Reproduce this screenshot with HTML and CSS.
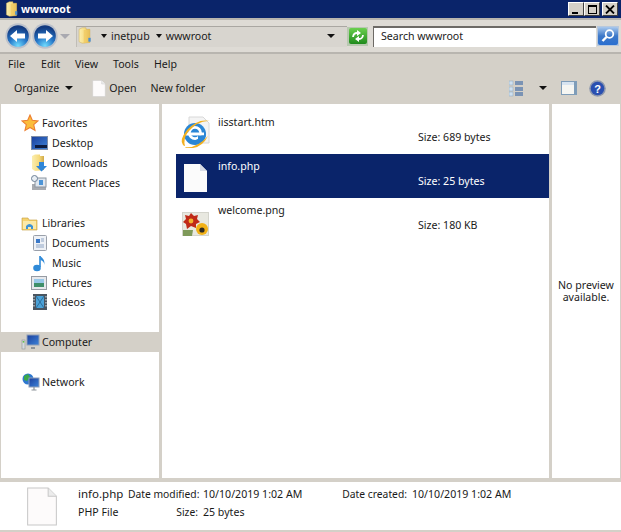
FILE: index.html
```html
<!DOCTYPE html>
<html lang="en">
<head>
    <meta charset="UTF-8">
    <meta name="viewport" content="width=device-width, initial-scale=1.0">
    <title>wwwroot</title>
    <link rel="stylesheet" href="styles.css">
</head>
<body>
    <svg class="defs" width="0" height="0">
        <defs>
            <linearGradient id="folderFill" x1="0" y1="0" x2="1" y2="0">
                <stop offset="0" stop-color="#fbeeb0"/><stop offset="0.6" stop-color="#f6da7c"/><stop offset="1" stop-color="#cfa94a"/>
            </linearGradient>
            <radialGradient id="orbFill" cx="0.5" cy="0.95" r="0.85">
                <stop offset="0" stop-color="#6fdcff"/><stop offset="0.5" stop-color="#2677c8"/><stop offset="1" stop-color="#123a80"/>
            </radialGradient>
            <linearGradient id="greenFill" x1="0" y1="0" x2="0" y2="1">
                <stop offset="0" stop-color="#6bd04f"/><stop offset="1" stop-color="#1f8a1c"/>
            </linearGradient>
            <linearGradient id="blueBtn" x1="0" y1="0" x2="0" y2="1">
                <stop offset="0" stop-color="#a8c8ee"/><stop offset="0.5" stop-color="#3d78c8"/><stop offset="1" stop-color="#2a6fd0"/>
            </linearGradient>
            <linearGradient id="screenFill" x1="0" y1="0" x2="1" y2="1">
                <stop offset="0" stop-color="#1b3f9c"/><stop offset="1" stop-color="#3d83d8"/>
            </linearGradient>
            <symbol id="i-folder" viewBox="0 0 16 22">
                <path d="M1 3 L5 1 L10 1 L10 3 L15 3 L15 20 L5 21 L1 19 Z" fill="url(#folderFill)" stroke="#c8a850" stroke-width=".6"/>
                <path d="M7 4 L15 3 L15 20 L7 21 Z" fill="#f0c860" opacity=".7"/>
                <rect x="13" y="14" width="3" height="5" fill="#4a8ed0"/>
            </symbol>
            <symbol id="i-orb" viewBox="0 0 26 26">
                <circle cx="13" cy="13" r="12.7" fill="#bcc1cb"/>
                <circle cx="13" cy="13" r="10.8" fill="url(#orbFill)"/>
                <path d="M5 13 L12 7 L12 10.5 L20 10.5 L20 15.5 L12 15.5 L12 19 Z" fill="#fff"/>
            </symbol>
            <symbol id="i-page" viewBox="0 0 30 38">
                <path d="M1 1 L21 1 L29 9 L29 37 L1 37 Z" fill="#fdfbfb" stroke="#c8c8c8"/>
                <path d="M21 1 L21 9 L29 9" fill="#ececec" stroke="#c8c8c8"/>
            </symbol>
        </defs>
    </svg>

    <div class="window">
        <div class="titlebar">
            <svg class="title-icon" width="15" height="16"><use href="#i-folder"/></svg>
            <span class="title-text">wwwroot</span>
            <div class="win-buttons">
                <div class="win-btn"><span class="glyph-min"></span></div>
                <div class="win-btn"><span class="glyph-max"></span></div>
                <div class="win-btn win-btn-close">
                    <svg width="10" height="9" viewBox="0 0 10 9"><path d="M1 0.5 L9 8.5 M9 0.5 L1 8.5" stroke="#000" stroke-width="1.8"/></svg>
                </div>
            </div>
        </div>

        <div class="addressbar">
            <div class="nav">
                <svg width="26" height="26"><use href="#i-orb"/></svg>
                <svg class="flip" width="26" height="26"><use href="#i-orb"/></svg>
                <span class="nav-drop"></span>
            </div>
            <div class="crumbs">
                <svg class="crumb-folder" width="15" height="17"><use href="#i-folder"/></svg>
                <span class="arrow"></span>
                <span class="crumb">inetpub</span>
                <span class="arrow"></span>
                <span class="crumb">wwwroot</span>
                <span class="arrow arrow-end"></span>
            </div>
            <div class="refresh">
                <svg width="18" height="16" viewBox="0 0 18 16">
                    <rect width="18" height="16" rx="2" fill="url(#greenFill)"/>
                    <path d="M4 9 Q4.5 5 8 5 M14 7 Q13.5 11 10 11" fill="none" stroke="#fff" stroke-width="1.8"/>
                    <path d="M8 2 L12 5 L8 8 Z M10 8 L6 11 L10 14 Z" fill="#fff"/>
                </svg>
            </div>
            <div class="search">Search wwwroot</div>
            <div class="search-btn">
                <svg width="20" height="18" viewBox="0 0 20 18">
                    <rect width="20" height="18" rx="2" fill="url(#blueBtn)"/>
                    <circle cx="11.5" cy="7" r="3.8" fill="none" stroke="#fff" stroke-width="1.8"/>
                    <path d="M8.5 10 L4.5 14" stroke="#fff" stroke-width="2.4"/>
                </svg>
            </div>
        </div>

        <div class="menubar">
            <span class="menu-file">File</span>
            <span class="menu-edit">Edit</span>
            <span class="menu-view">View</span>
            <span class="menu-tools">Tools</span>
            <span>Help</span>
        </div>

        <div class="toolbar">
            <span>Organize</span>
            <span class="arrow tool-arrow"></span>
            <svg class="tool-page" width="14" height="17"><use href="#i-page"/></svg>
            <span>Open</span>
            <span class="tool-new">New folder</span>
            <div class="tool-right">
                <svg class="tool-views" width="15" height="17" viewBox="0 0 15 17">
                    <rect x="0" y="1" width="4" height="4" fill="#cfe0ef" stroke="#8aa8c0" stroke-width=".5"/>
                    <rect x="0" y="7" width="4" height="4" fill="#cfe0ef" stroke="#8aa8c0" stroke-width=".5"/>
                    <rect x="0" y="12" width="4" height="4" fill="#cfe0ef" stroke="#8aa8c0" stroke-width=".5"/>
                    <rect x="6" y="1" width="8" height="4" fill="#7a93b4"/>
                    <rect x="6" y="7" width="8" height="4" fill="#7a93b4"/>
                    <rect x="6" y="12" width="8" height="4" fill="#7a93b4"/>
                </svg>
                <span class="arrow"></span>
                <span class="pane-toggle"></span>
                <svg width="17" height="17" viewBox="0 0 17 17">
                    <circle cx="8.5" cy="8.5" r="8.3" fill="#8d97ad"/>
                    <circle cx="8.5" cy="8.5" r="6.8" fill="#2a4fb0"/>
                    <text class="help-mark" x="8.5" y="12.6" text-anchor="middle">?</text>
                </svg>
            </div>
        </div>

        <div class="panes">
            <div class="nav-pane">
                <div class="nav-row nav-head">
                    <svg width="18" height="18" viewBox="0 0 18 18"><path d="M9 1 L11.3 6.3 L17 6.9 L12.7 10.7 L14 16.4 L9 13.5 L4 16.4 L5.3 10.7 L1 6.9 L6.7 6.3 Z" fill="#fbbd3c" stroke="#ed7f32" stroke-width="1.1"/></svg>
                    <span>Favorites</span>
                </div>
                <div class="nav-row nav-child">
                    <svg width="17" height="15" viewBox="0 0 17 15"><rect x=".5" y=".5" width="16" height="13" fill="url(#screenFill)" stroke="#7f8ea8"/><rect x="4" y="9" width="12" height="3" fill="#0d1b3e"/></svg>
                    <span>Desktop</span>
                </div>
                <div class="nav-row nav-child">
                    <svg width="16" height="18" viewBox="0 0 16 18"><path d="M1 2 L4 0.5 L9 0.5 L9 2 L13 2 L13 16 L4 17 L1 15 Z" fill="url(#folderFill)"/><path d="M8 8 L13 8 L13 12 L16 12 L10.5 17.5 L5 12 L8 12 Z" fill="#2f86d8"/></svg>
                    <span>Downloads</span>
                </div>
                <div class="nav-row nav-child">
                    <svg width="16" height="16" viewBox="0 0 16 16"><rect x="1" y="9" width="14" height="6" fill="#a8abb0"/><rect x="4" y="3" width="11" height="9" fill="#dfe6ee" stroke="#8c95a0"/><rect x="8" y="5" width="4" height="5" fill="#4d94d6"/><circle cx="3.5" cy="3.5" r="3" fill="#e8eef4" stroke="#6d8096"/></svg>
                    <span>Recent Places</span>
                </div>

                <div class="nav-row nav-head nav-gap">
                    <svg width="17" height="15" viewBox="0 0 17 15"><path d="M1 2 L7 2 L8 4 L16 4 L16 14 L1 14 Z" fill="#f6d36f" stroke="#c59b3b" stroke-width=".6"/><rect x="2" y="5" width="13" height="8" fill="#fbe9a8"/><path d="M5 13 L5 10 Q8.5 6 12 10 L12 13 L10 13 L10 11 L7 11 L7 13 Z" fill="#3d93d6"/></svg>
                    <span>Libraries</span>
                </div>
                <div class="nav-row nav-child">
                    <svg class="narrow" width="14" height="16" viewBox="0 0 14 16"><rect x=".5" y=".5" width="13" height="15" rx="1" fill="#eef1f6" stroke="#9aa0aa"/><rect x="3" y="4" width="4" height="4" fill="#3a78c8"/><path d="M8 4 H11 M8 6 H11 M3 10 H11 M3 12 H11" stroke="#8ea5c5"/></svg>
                    <span>Documents</span>
                </div>
                <div class="nav-row nav-child">
                    <svg class="narrow" width="14" height="17" viewBox="0 0 14 17"><path d="M7 1 L7 12" stroke="#2f8ad8" stroke-width="1.6"/><ellipse cx="4" cy="13" rx="3.8" ry="3.2" fill="#2f8ad8"/><path d="M7 1 Q12 4 11.5 10 Q11 6 7.5 5 Z" fill="#2f8ad8"/></svg>
                    <span>Music</span>
                </div>
                <div class="nav-row nav-child">
                    <svg width="16" height="14" viewBox="0 0 16 14"><rect x=".5" y=".5" width="15" height="13" fill="#e6e8ec" stroke="#969ba3"/><rect x="3" y="3" width="10" height="4" fill="#98c8e8"/><rect x="3" y="7" width="10" height="4" fill="#3f8f6a"/></svg>
                    <span>Pictures</span>
                </div>
                <div class="nav-row nav-child nav-tight">
                    <svg class="narrow" width="14" height="16" viewBox="0 0 14 16"><rect width="14" height="16" fill="#4a5560"/><rect x="3" y="2" width="8" height="12" fill="#4ba2d8"/><path d="M3 2 L11 14 M11 2 L3 14" stroke="#2d6f9c"/><path d="M1 2 V14 M13 2 V14" stroke="#b8c0c8" stroke-dasharray="1.5 1.5" stroke-width="1.4"/></svg>
                    <span>Videos</span>
                </div>

                <div class="nav-row nav-head nav-gap nav-active">
                    <svg width="19" height="16" viewBox="0 0 19 16"><rect x="1" y="6" width="3" height="9" fill="#d6dadd" stroke="#8d9399" stroke-width=".6"/><rect x="1.7" y="7" width="1.6" height="1.6" fill="#63c048"/><rect x="6" y="1" width="12" height="10" fill="url(#screenFill)" stroke="#8d9eb8"/><path d="M10 14 L14 14" stroke="#8d9399" stroke-width="2"/></svg>
                    <span>Computer</span>
                </div>

                <div class="nav-row nav-head nav-gap">
                    <svg width="19" height="18" viewBox="0 0 19 18"><circle cx="7" cy="6" r="5.5" fill="#2f78d0"/><path d="M3 3 L7 1 L9 4 L6 8 L3 7 Z" fill="#3aa84a"/><rect x="8" y="5" width="10" height="9" fill="url(#screenFill)" stroke="#8d9eb8"/><path d="M13 14 V17 M10.5 17 H15.5" stroke="#8d9399" stroke-width="1.2"/></svg>
                    <span>Network</span>
                </div>
            </div>

            <div class="file-pane">
                <div class="file-row">
                    <svg class="file-icon" width="34" height="32" viewBox="0 0 34 32">
                        <path d="M13 1 L27 1 L33 7 L33 27 L13 27 Z" fill="#f4f4f4" stroke="#d8d8d8"/>
                        <circle cx="19" cy="18" r="11" fill="#2a86d6"/>
                        <path d="M10 16.5 H28 V19.5 H10 Z" fill="#fff"/>
                        <circle cx="19" cy="17" r="5.6" fill="none" stroke="#fff" stroke-width="2.6"/>
                        <path d="M22 19.5 H30 L27 26 H16 L22 23 Z" fill="#2a86d6"/>
                        <path d="M7 29 Q3 24 11 14 Q22 2 34 5 Q22 4 12 16 Q7 23 9 30 Q8 30 7 29 Z" fill="#f2b020"/>
                        <path d="M9 31 Q20 33 32 20 Q25 34 10 32 Z" fill="#f2b020"/>
                    </svg>
                    <div class="file-name">iisstart.htm</div>
                    <div class="file-size">Size: 689 bytes</div>
                </div>
                <div class="file-row file-selected">
                    <svg class="file-icon" width="34" height="32" viewBox="0 0 34 32">
                        <path d="M8 4 L24 4 L31 11 L31 32 L8 32 Z" fill="#fbfbfb"/>
                        <path d="M24 4 L24 11 L31 11 Z" fill="#d8dce6"/>
                    </svg>
                    <div class="file-name">info.php</div>
                    <div class="file-size">Size: 25 bytes</div>
                </div>
                <div class="file-row">
                    <svg class="file-icon" width="34" height="32" viewBox="0 0 34 32">
                        <rect x="6.5" y="8.5" width="26" height="23" fill="#e8e8e0" stroke="#d4d4cc"/>
                        <path d="M15 9 L18 12 L22 11 L21 15 L24 18 L20 20 L20 24 L15 22 L11 25 L10 20 L7 18 L10 15 L9 11 L13 12 Z" fill="#c02a18"/>
                        <circle cx="15" cy="17" r="2.4" fill="#f3b32c"/>
                        <circle cx="26" cy="25" r="6" fill="#f2b116"/>
                        <circle cx="26" cy="26" r="2.6" fill="#2f2a20"/>
                        <path d="M7 26 L17 26 L16 32 L7 32 Z" fill="#7f9a5a"/>
                    </svg>
                    <div class="file-name">welcome.png</div>
                    <div class="file-size">Size: 180 KB</div>
                </div>
            </div>

            <div class="preview-pane">No preview available.</div>
        </div>

        <div class="details">
            <svg class="details-icon" width="32" height="39"><use href="#i-page"/></svg>
            <div class="details-grid">
                <span class="details-name">info.php</span>
                <span class="details-label">Date modified:</span>
                <span>10/10/2019 1:02 AM</span>
                <span class="details-label">Date created:</span>
                <span>10/10/2019 1:02 AM</span>
                <span>PHP File</span>
                <span class="details-label">Size:</span>
                <span>25 bytes</span>
            </div>
        </div>
    </div>
</body>
</html>
```

FILE: styles.css
```css
html, body {
    margin: 0;
    padding: 0;
}
body {
    width: 621px;
    height: 532px;
    overflow: hidden;
    background: #d4d0c8;
    font-family: "Noto Sans", sans-serif;
    font-size: 10.6px;
    color: #1a1a1a;
}
svg {
    display: block;
    flex: none;
}
.defs {
    position: absolute;
}
.window {
    display: flex;
    flex-direction: column;
    height: 532px;
}

/* title bar */
.titlebar {
    display: flex;
    align-items: center;
    height: 18px;
    box-sizing: border-box;
    padding: 0 3px 0 4px;
    background: #0a246a;
    color: #fff;
}
.title-text {
    margin-left: 2px;
    font-weight: bold;
}
.win-buttons {
    display: flex;
    margin-left: auto;
}
.win-btn {
    display: flex;
    align-items: center;
    justify-content: center;
    width: 16px;
    height: 14px;
    box-sizing: border-box;
    background: #d4d0c8;
    border: 1px solid;
    border-color: #fff #404040 #404040 #fff;
}
.win-btn-close {
    margin-left: 2px;
}
.glyph-min {
    width: 6px;
    height: 2px;
    margin-top: 7px;
    margin-right: 3px;
    background: #000;
}
.glyph-max {
    width: 9px;
    height: 9px;
    box-sizing: border-box;
    border: 1px solid #000;
    border-top-width: 2px;
}

/* address bar */
.addressbar {
    display: flex;
    align-items: center;
    height: 36px;
    box-sizing: border-box;
    padding: 0 2px 0 5px;
    background: #dedbd5;
    border-top: 2px solid #b8b5af;
    border-bottom: 2px solid #b8b5af;
}
.nav {
    display: flex;
    align-items: center;
    width: 71px;
}
.nav svg + .flip {
    margin-left: 1px;
    transform: scaleX(-1);
}
.nav-drop {
    margin-left: 2px;
    border: 5px solid transparent;
    border-top: 5px solid #a9a9b0;
    border-bottom: 0;
}
.crumbs {
    display: flex;
    align-items: center;
    width: 271px;
    height: 21px;
    box-sizing: border-box;
    padding-bottom: 2px;
    background: #d8d5cf;
    border-top: 1px solid #aaa7a2;
    border-left: 1px solid #c0bdb7;
}
.crumb-folder {
    margin-right: 9px;
}
.arrow {
    display: block;
    flex: none;
    width: 0;
    height: 0;
    margin: 0 4px 0 0;
    border: 3px solid transparent;
    border-top: 4px solid #111;
    border-bottom: 0;
}
.crumbs .crumb {
    margin-right: 6px;
}
.crumbs .arrow-end {
    margin: 0 12px 0 auto;
    border-width: 4px 4px 0;
}
.refresh {
    display: flex;
    align-items: center;
    justify-content: center;
    width: 21px;
    height: 19px;
    box-sizing: border-box;
    background: #b8c8b0;
}
.search {
    width: 223px;
    height: 21px;
    margin-left: 5px;
    box-sizing: border-box;
    padding-left: 7px;
    line-height: 16px;
    background: #fff;
    border-top: 2px solid #6d6a66;
    border-left: 1px solid #6d6a66;
}
.search-btn {
    width: 22px;
    height: 20px;
    display: flex;
    align-items: center;
    justify-content: center;
    background: #b8c8dc;
    margin-left: 1px;
}

/* menu and tool bars */
.menubar {
    display: flex;
    align-items: center;
    height: 20px;
    box-sizing: border-box;
    padding-left: 8px;
}
.menu-file { width: 33px; }
.menu-edit { width: 34px; }
.menu-view { width: 38px; }
.menu-tools { width: 41px; }
.toolbar {
    display: flex;
    align-items: center;
    height: 30px;
    padding: 0 15px 2px 14px;
    box-sizing: border-box;
}
.toolbar .tool-arrow {
    margin: 0 0 0 6px;
    border-width: 4px 4px 0;
}
.tool-page {
    margin: 0 3px 0 19px;
}
.tool-new {
    margin-left: 14px;
}
.tool-right {
    display: flex;
    align-items: center;
    margin-left: auto;
}
.tool-right .arrow {
    margin: 0 14px 0 15px;
    border-width: 4px 4px 0;
}
.pane-toggle {
    width: 16px;
    height: 14px;
    box-sizing: border-box;
    margin-right: 12px;
    background: linear-gradient(#d8e4f0 3px, #f6f6f2 3px);
    border: 1px solid #7f9db9;
    border-right-width: 3px;
}
.help-mark {
    font-family: "Liberation Sans", sans-serif;
    font-size: 11px;
    font-weight: bold;
    fill: #fff;
}

/* the three panes */
.panes {
    display: flex;
    height: 374px;
    padding: 0 1px;
}
.nav-pane {
    width: 158px;
    padding-top: 9px;
    box-sizing: border-box;
    background: #fff;
}
.nav-row {
    display: grid;
    grid-template-columns: 21px 1fr;
    align-items: center;
    height: 20px;
}
.nav-head {
    padding-left: 20px;
}
.nav-child {
    padding-left: 30px;
}
.nav-child .narrow {
    margin-left: 2px;
}
.nav-gap {
    margin-top: 20px;
}
.nav-tight {
    margin-top: -1px;
}
.nav-active {
    background: #d4d0c8;
}
.file-pane {
    width: 387px;
    margin-left: 3px;
    padding: 6px 0 0 14px;
    box-sizing: border-box;
    background: #fff;
}
.file-row {
    display: grid;
    grid-template-columns: 42px 200px 1fr;
    grid-template-rows: 22px 22px;
    height: 44px;
    box-sizing: border-box;
    padding-top: 1px;
}
.file-selected {
    background: #0a246a;
    color: #fff;
}
.file-icon {
    grid-row: 1 / 3;
    margin-top: 5px;
}
.file-name {
    line-height: 22px;
}
.file-size {
    grid-row: 2;
    grid-column: 3;
    line-height: 14px;
    margin-top: -3px;
}
.preview-pane {
    display: flex;
    align-items: center;
    width: 68px;
    margin-left: 3px;
    box-sizing: border-box;
    padding: 0 2px;
    text-align: center;
    line-height: 12px;
    background: #fff;
}

/* details */
.details {
    display: flex;
    height: 48px;
    margin-top: 4px;
    background: #fff;
}
.details-icon {
    margin: 5px 0 0 26px;
}
.details-grid {
    display: grid;
    grid-template-columns: 50px 75px 137px 72px auto;
    grid-template-rows: 19px 18px;
    align-items: center;
    margin: 2px 0 0 20px;
    white-space: nowrap;
}
.details-name {
    font-size: 11.5px;
}
.details-label {
    text-align: right;
    padding-right: 5px;
    font-size: 10.3px;
}
```
